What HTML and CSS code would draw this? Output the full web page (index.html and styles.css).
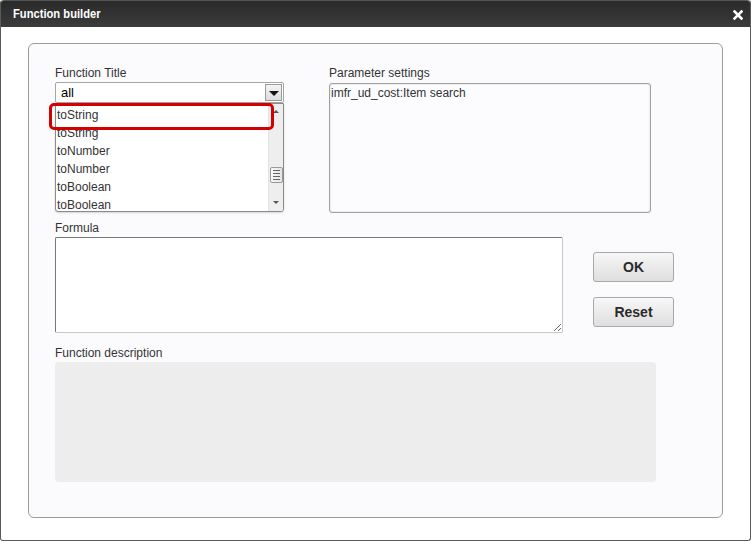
FILE: index.html
```html
<!DOCTYPE html>
<html>
<head>
<meta charset="utf-8">
<link rel="stylesheet" href="styles.css">
</head>
<body>
<div class="window">
  <div class="titlebar">
    <span class="title">Function builder</span>
    <svg class="close" width="10" height="10" viewBox="0 0 10 10"><path d="M1.5 1.5 L8.5 8.5 M8.5 1.5 L1.5 8.5" stroke="#fff" stroke-width="2.6" stroke-linecap="square"/></svg>
  </div>
  <div class="content">
    <div class="panel">
      <div class="row-top">
        <div class="col-left">
          <div class="label">Function Title</div>
          <div class="select">
            <span class="select-value">all</span>
            <span class="select-btn"><span class="tri-down"></span></span>
          </div>
          <div class="list">
            <div class="items">
              <div class="item">toString</div>
              <div class="item">toString</div>
              <div class="item">toNumber</div>
              <div class="item">toNumber</div>
              <div class="item">toBoolean</div>
              <div class="item">toBoolean</div>
            </div>
            <div class="scrollbar">
              <span class="sb-up"></span>
              <span class="sb-thumb"><i></i><i></i><i></i><i></i></span>
              <span class="sb-down"></span>
            </div>
          </div>
          <div class="highlight"></div>
        </div>
        <div class="col-right">
          <div class="label">Parameter settings</div>
          <div class="params">imfr_ud_cost:Item search</div>
        </div>
      </div>
      <div class="label label-formula">Formula</div>
      <div class="row-formula">
        <textarea class="formula"></textarea>
        <div class="buttons">
          <button class="btn">OK</button>
          <button class="btn">Reset</button>
        </div>
      </div>
      <div class="label label-desc">Function description</div>
      <div class="desc"></div>
    </div>
  </div>
</div>
</body>
</html>
```

FILE: styles.css
```css
* { box-sizing: border-box; }
html, body { margin: 0; padding: 0; }
body {
  width: 751px;
  height: 541px;
  font-family: "Liberation Sans", Arial, sans-serif;
  font-size: 12px;
  color: #333;
  background: #fff;
  overflow: hidden;
}
.window {
  width: 751px;
  height: 541px;
  display: flex;
  flex-direction: column;
  border: 1px solid #5a5a5a;
  border-top: none;
  border-radius: 3px;
  background: #fff;
  overflow: hidden;
}
.titlebar {
  height: 27px;
  flex: none;
  background: linear-gradient(#2a2a2a, #3b3b3b);
  border-top: 1px solid #555;
  display: flex;
  align-items: center;
  justify-content: space-between;
  padding: 0 7px 0 12px;
  border-radius: 3px 3px 0 0;
}
.title {
  color: #fff;
  font-family: "Liberation Sans", Arial, sans-serif;
  font-weight: bold;
  font-size: 13px;
  display: inline-block;
  transform: scaleX(0.86);
  transform-origin: left center;
  margin-top: -1px;
}
.close { display: block; margin-top: 2px; }
.content {
  flex: 1;
  padding: 16px 27px 22px 27px;
  display: flex;
}
.panel {
  flex: 1;
  border: 1px solid #9c9c9c;
  border-radius: 6px;
  background: #fbfbfd;
  padding: 22px 26px 0 26px;
}
.label {
  line-height: 14px;
  height: 14px;
  color: #333;
}
.row-top {
  display: flex;
  gap: 45px;
}
.col-left {
  width: 229px;
  position: relative;
}
.select {
  margin-top: 2px;
  height: 21px;
  border: 1px solid #a5a5a5;
  border-radius: 2px;
  background: #fff;
  display: flex;
  align-items: center;
  justify-content: space-between;
  padding: 0 1px 0 5px;
}
.select-value { font-size: 13px; color: #000; }
.select-btn {
  width: 17px;
  height: 17px;
  border: 1px solid #9a9a9a;
  background: linear-gradient(#f4f4f4, #dcdcdc);
  display: flex;
  align-items: center;
  justify-content: center;
}
.tri-down {
  width: 0; height: 0;
  border-left: 5px solid transparent;
  border-right: 5px solid transparent;
  border-top: 5px solid #111;
  margin-top: 1px;
}
.list {
  height: 109px;
  border: 1px solid #8a8a8a;
  border-radius: 0 0 3px 3px;
  background: #fff;
  display: flex;
  overflow: hidden;
  box-shadow: 0 1px 2px rgba(0,0,0,0.15);
}
.items { flex: 1; padding: 2px 0 0 1px; overflow: hidden; }
.item {
  height: 18px;
  line-height: 18px;
  font-size: 12px;
  color: #333;
}
.scrollbar {
  width: 15px;
  background: #eeeeee;
  border-left: 1px solid #e2e2e2;
  display: flex;
  flex-direction: column;
  align-items: center;
}
.sb-up {
  margin-top: 6px;
  width: 0; height: 0;
  border-left: 3px solid transparent;
  border-right: 3px solid transparent;
  border-bottom: 3px solid #555;
}
.sb-thumb {
  margin-top: 54px;
  width: 13px;
  height: 16px;
  border: 1px solid #9a9a9a;
  border-radius: 2px;
  background: linear-gradient(90deg, #f8f8f8, #e4e4e4);
  display: flex;
  flex-direction: column;
  align-items: center;
  justify-content: center;
  gap: 2px;
}
.sb-thumb i {
  display: block;
  width: 7px;
  height: 1px;
  background: #666;
}
.sb-down {
  margin-top: auto;
  margin-bottom: 7px;
  width: 0; height: 0;
  border-left: 3px solid transparent;
  border-right: 3px solid transparent;
  border-top: 3px solid #555;
}
.highlight {
  position: absolute;
  left: -6px;
  top: 37px;
  width: 225px;
  height: 27px;
  border: 3px solid #d40000;
  border-radius: 5px;
}
.col-right { width: 322px; }
.params {
  margin-top: 3px;
  height: 130px;
  border: 1px solid #a0a0a0;
  border-radius: 3px;
  background: #fcfcff;
  box-shadow: inset 0 0 2px rgba(0,0,0,0.2);
  padding: 2px 1px;
  line-height: 14px;
  color: #333;
}
.label-formula { margin-top: 8px; }
.row-formula {
  display: flex;
  margin-top: 2px;
}
.formula {
  width: 508px;
  height: 96px;
  margin: 0;
  border: 1px solid;
  border-color: #767676 #c8c8c8 #c8c8c8 #767676;
  border-radius: 2px;
  background: #fff;
  font: inherit;
  display: block;
}
.buttons {
  margin-left: 30px;
  padding-top: 15px;
  display: flex;
  flex-direction: column;
  gap: 15px;
}
.btn {
  width: 81px;
  height: 30px;
  border: 1px solid #a8a8a8;
  border-radius: 3px;
  background: linear-gradient(#f7f7f7, #dedede);
  font-family: "Liberation Sans", Arial, sans-serif;
  font-weight: bold;
  font-size: 14px;
  color: #2a2a2a;
  padding: 0;
  margin: 0;
}
.label-desc { margin-top: 13px; }
.desc {
  margin-top: 2px;
  width: 601px;
  height: 120px;
  background: #ededed;
  border-radius: 4px;
}
```
